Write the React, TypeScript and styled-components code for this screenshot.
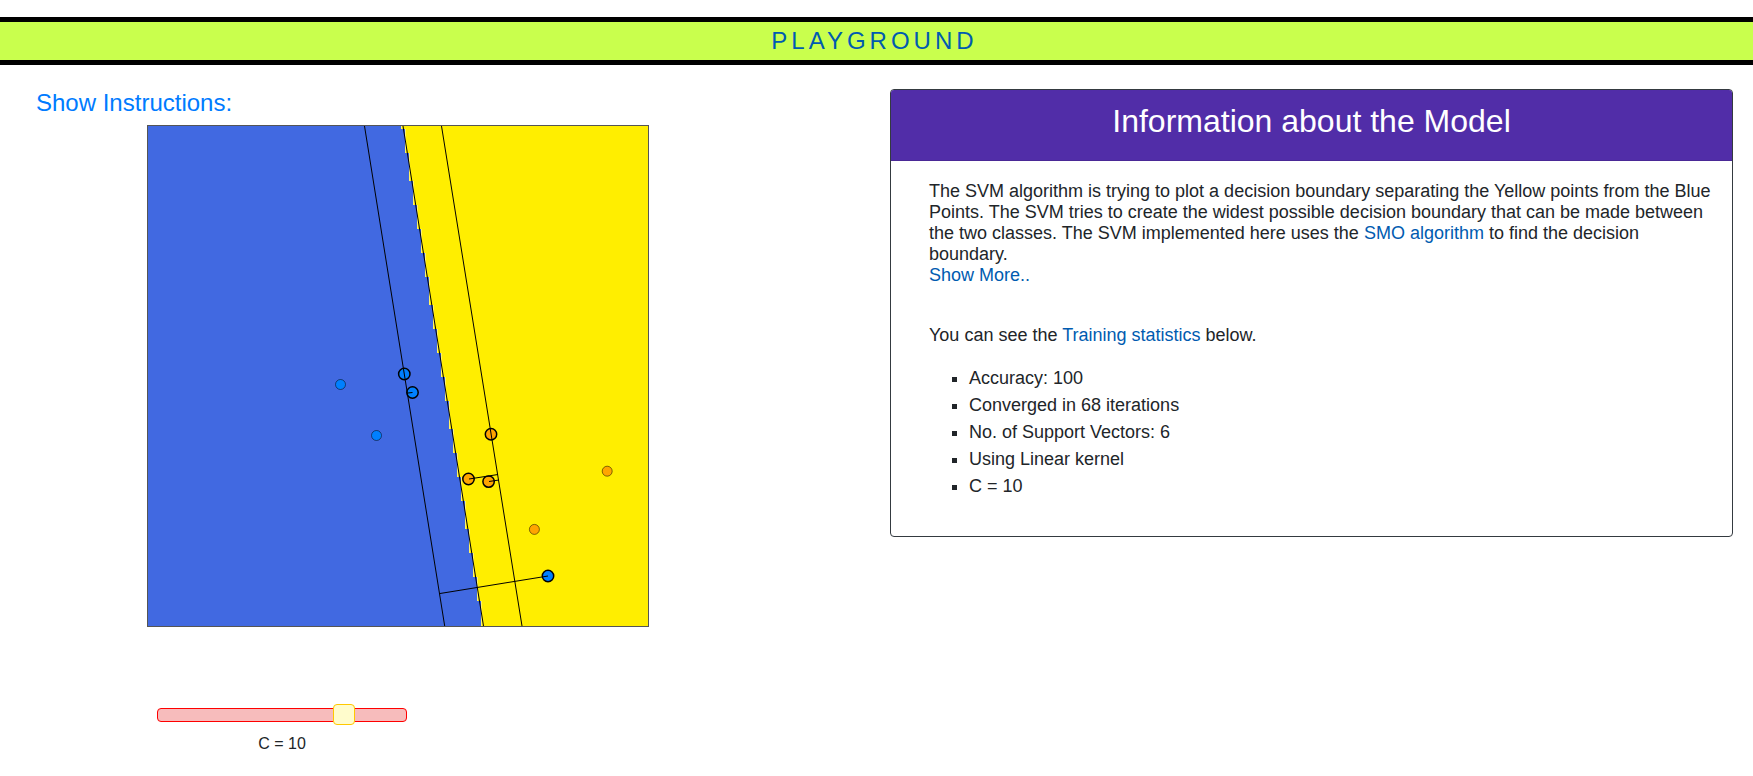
import React, { useState } from "react";
import styled, { createGlobalStyle } from "styled-components";

const GlobalStyle = createGlobalStyle`
  *, *::before, *::after { box-sizing: border-box; }
  body {
    margin: 0;
    background: #fff;
    color: #212529;
    font-family: "Liberation Sans", Arial, sans-serif;
    font-size: 16px;
    line-height: 24px;
  }
`;

const Banner = styled.header`
  margin-top: 17px;
  border: solid #000;
  border-width: 5px 0;
  background: #c9ff4d;
  text-align: center;
`;

const BannerTitle = styled.h1`
  margin: 0;
  padding: 4px 4px 4px 0;
  color: #005bb0;
  font-size: 24px;
  font-weight: 400;
  line-height: 30px;
  letter-spacing: 4px;
`;

const Columns = styled.main`
  display: grid;
  grid-template-columns: minmax(0, 1fr) minmax(0, 1fr);
  gap: 11px;
  align-items: start;
  padding: 24px 20px 20px 36px;
`;

const Playground = styled.section`
  display: flex;
  flex-direction: column;
  align-items: flex-start;
`;

const InstructionsButton = styled.button`
  margin: 0;
  padding: 0;
  border: 0;
  background: none;
  color: #007bff;
  font: inherit;
  font-size: 24px;
  line-height: 28px;
  cursor: pointer;
`;

const Plot = styled.svg`
  display: block;
  width: 502px;
  height: 502px;
  margin: 8px 0 0 111px;
  border: 1px solid #555;
`;

const SliderGroup = styled.div`
  display: flex;
  flex-direction: column;
  align-items: center;
  width: 250px;
  margin: 77px 0 0 121px;
`;

const Slider = styled.input`
  appearance: none;
  width: 100%;
  height: 22px;
  margin: 0;
  background: none;
  cursor: pointer;

  &::-webkit-slider-runnable-track {
    height: 14px;
    border: 1px solid #f00;
    border-radius: 4px;
    background: #f7bcbc;
  }

  &::-webkit-slider-thumb {
    appearance: none;
    width: 22px;
    height: 21px;
    margin-top: -5px;
    border: 1px solid #ffc800;
    border-radius: 4px;
    background: #fffccc;
  }
`;

const SliderLabel = styled.label`
  margin-top: 6px;
`;

const Card = styled.section`
  border: 1px solid #343a40;
  border-radius: 4px;
  overflow: hidden;
`;

const CardHeader = styled.div`
  padding: 12px 20px 20px;
  border-bottom: 1px solid #4a2996;
  background: #512da8;
  text-align: center;
`;

const CardTitle = styled.h2`
  margin: 0;
  color: #fff;
  font-size: 32px;
  font-weight: 400;
  line-height: 38px;
`;

const CardBody = styled.div`
  padding: 20px 20px 36px 38px;
  font-size: 18px;
  line-height: 21px;
`;

const Paragraph = styled.p`
  margin: 0 0 39px;
`;

const TextLink = styled.a`
  color: #005bb0;
  text-decoration: none;
`;

const Statistics = styled.ul`
  margin: 19px 0 0;
  padding-left: 40px;
  list-style: square;
  line-height: 27px;
`;

const COLORS = {
  blueArea: "#4169e1",
  yellowArea: "#ffee00",
  blue: "#0080ff",
  orange: "#ffa500",
};

/* Lower edge of each four-pixel-wide step of the classified region. */
const STEP_ENDS = [
  3, 27, 55, 79, 103, 127, 151, 179, 203, 227, 251, 275, 303, 327, 351, 375,
  403, 427, 451, 475, 500,
];

type Line = [number, number, number, number];

const BOUNDARY_LINES: Line[] = [
  [216.5, 0, 296.7, 500],
  [255, 0, 335.5, 500],
  [293.5, 0, 374, 500],
];

const SLACK_LINES: Line[] = [
  [264.5, 266.5, 260, 267],
  [321, 353, 350, 348.5],
  [341, 355.5, 351, 354],
  [400, 450, 292, 467.5],
];

interface Point {
  x: number;
  y: number;
  color: string;
  support?: boolean;
}

const POINTS: Point[] = [
  { x: 192.5, y: 258.5, color: COLORS.blue },
  { x: 228.5, y: 309.5, color: COLORS.blue },
  { x: 256.3, y: 248, color: COLORS.blue, support: true },
  { x: 264.5, y: 266.5, color: COLORS.blue, support: true },
  { x: 400, y: 450, color: COLORS.blue, support: true },
  { x: 343, y: 308.3, color: COLORS.orange, support: true },
  { x: 320.5, y: 353, color: COLORS.orange, support: true },
  { x: 340.6, y: 355.6, color: COLORS.orange, support: true },
  { x: 459.2, y: 345.2, color: COLORS.orange },
  { x: 386.4, y: 403.4, color: COLORS.orange },
];

function DecisionPlot() {
  const lines = (items: Line[]) =>
    items.map(([x1, y1, x2, y2]) => (
      <line key={`${x1}-${y1}`} x1={x1} y1={y1} x2={x2} y2={y2} stroke="#000" />
    ));

  return (
    <Plot viewBox="0 0 500 500" role="img" aria-label="Decision boundary">
      <rect width="500" height="500" fill={COLORS.yellowArea} />
      {STEP_ENDS.map((end, i) => {
        const top = i === 0 ? 0 : STEP_ENDS[i - 1];
        return (
          <g key={end} shapeRendering="crispEdges">
            <rect y={top} width={253 + 4 * i} height={end - top} fill={COLORS.blueArea} />
            <rect x={253 + 4 * i} y={top} width="1" height={end - top} fill="#fff466" />
          </g>
        );
      })}
      {POINTS.map(({ x, y, color, support }) => (
        <circle
          key={`${x}-${y}`}
          cx={x}
          cy={y}
          r={support ? 5.7 : 5}
          fill={color}
          stroke="#000"
          strokeWidth={support ? 1.5 : 0.5}
        />
      ))}
      {lines(BOUNDARY_LINES)}
      {lines(SLACK_LINES)}
    </Plot>
  );
}

export default function App() {
  const [exponent, setExponent] = useState(10);
  const c = Math.round(Math.pow(10, exponent / 10) * 100) / 100;

  return (
    <>
      <GlobalStyle />
      <Banner>
        <BannerTitle>PLAYGROUND</BannerTitle>
      </Banner>
      <Columns>
        <Playground>
          <InstructionsButton type="button">Show Instructions:</InstructionsButton>
          <DecisionPlot />
          <SliderGroup>
            <Slider
              id="c-value"
              type="range"
              min={-24}
              max={20}
              value={exponent}
              onChange={(event) => setExponent(Number(event.target.value))}
            />
            <SliderLabel htmlFor="c-value">C = {c}</SliderLabel>
          </SliderGroup>
        </Playground>
        <Card>
          <CardHeader>
            <CardTitle>Information about the Model</CardTitle>
          </CardHeader>
          <CardBody>
            <Paragraph>
              The SVM algorithm is trying to plot a decision boundary separating the Yellow
              points from the Blue Points. The SVM tries to create the widest possible
              decision boundary that can be made between the two classes. The SVM implemented
              here uses the <TextLink href="#smo">SMO algorithm</TextLink> to find the decision
              boundary.
              <br />
              <TextLink href="#more">Show More..</TextLink>
            </Paragraph>
            <div>
              You can see the <TextLink href="#statistics">Training statistics</TextLink> below.
            </div>
            <Statistics id="statistics">
              <li>Accuracy: 100</li>
              <li>Converged in 68 iterations</li>
              <li>No. of Support Vectors: 6</li>
              <li>Using Linear kernel</li>
              <li>C = {c}</li>
            </Statistics>
          </CardBody>
        </Card>
      </Columns>
    </>
  );
}
